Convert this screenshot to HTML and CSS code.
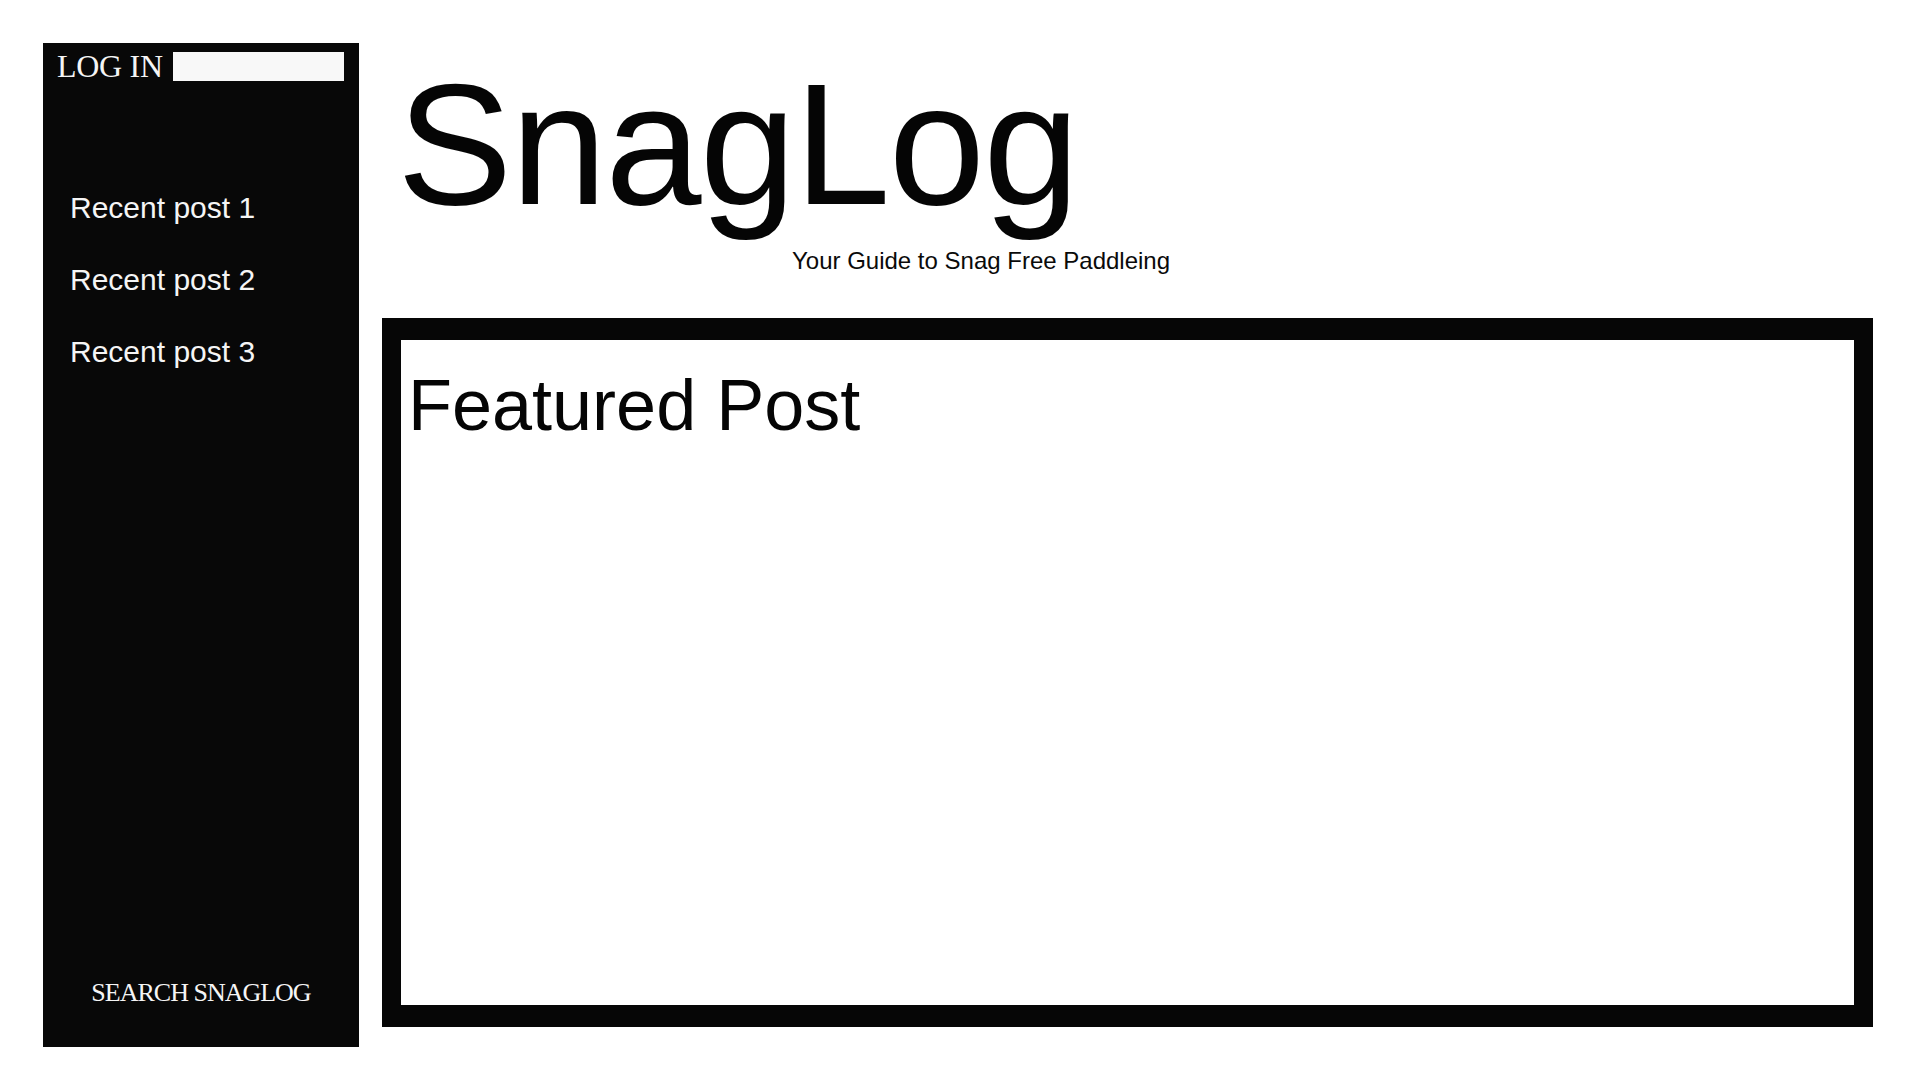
FILE: index.html
```html
<!DOCTYPE html>
<html lang="en">
<head>
  <meta charset="UTF-8">
  <title>SnagLog</title>
  <link rel="stylesheet" href="styles.css">
</head>
<body>
  <div class="page">
    <div class="sidebar">
      <div class="login">
        <span class="login-label">LOG IN</span>
        <input type="text" class="login-input">
      </div>
      <ul class="recent">
        <li>Recent post 1</li>
        <li>Recent post 2</li>
        <li>Recent post 3</li>
      </ul>
      <div class="search">SEARCH SNAGLOG</div>
    </div>

    <div class="main">
      <h1 class="title">SnagLog</h1>
      <p class="tagline">Your Guide to Snag Free Paddleing</p>
      <div class="featured">
        <h2>Featured Post</h2>
      </div>
    </div>
  </div>
</body>
</html>
```

FILE: styles.css
```css
body {
  margin: 0;
  background: #fff;
  font-family: "Liberation Sans", Arial, sans-serif;
}
.page {
  display: flex;
  gap: 23px;
  padding: 43px 47px 0 43px;
}

/* sidebar */
.sidebar {
  width: 316px;
  height: 1004px;
  flex-shrink: 0;
  background: #080808;
  color: #f5f5f5;
  display: flex;
  flex-direction: column;
}
.login {
  display: flex;
  align-items: flex-start;
  gap: 10px;
  padding: 9px 0 0 14px;
}
.login-label {
  font-family: "Liberation Serif", "Times New Roman", serif;
  font-size: 32px;
  line-height: 29px;
  letter-spacing: -0.3px;
}
.login-input {
  width: 171px;
  height: 29px;
  box-sizing: border-box;
  border: none;
  background: #f8f8f8;
  margin: 0;
  padding: 0;
}
.recent {
  list-style: none;
  margin: 91px 0 0 0;
  padding: 0 0 0 27px;
}
.recent li {
  font-size: 30px;
  line-height: 72px;
}
.search {
  margin-top: auto;
  padding-bottom: 41px;
  text-align: center;
  font-family: "Liberation Serif", "Times New Roman", serif;
  font-size: 26px;
  line-height: 1;
  letter-spacing: -1px;
}

/* main column */
.main {
  flex: 1;
  display: flex;
  flex-direction: column;
}
.title {
  margin: 15px 0 0 0;
  padding-left: 15px;
  font-size: 173px;
  font-weight: normal;
  line-height: 1;
  letter-spacing: -1.7px;
  color: #050505;
}
.tagline {
  margin: 18px 0 0 0;
  padding-left: 410px;
  font-size: 24px;
  line-height: 1;
  color: #0a0a0a;
}
.featured {
  margin-top: 45px;
  height: 709px;
  box-sizing: border-box;
  border-style: solid;
  border-color: #060606;
  border-width: 22px 19px;
  padding: 29px 0 0 7px;
}
.featured h2 {
  margin: 0;
  font-size: 72px;
  font-weight: normal;
  line-height: 1;
  color: #050505;
}
```
